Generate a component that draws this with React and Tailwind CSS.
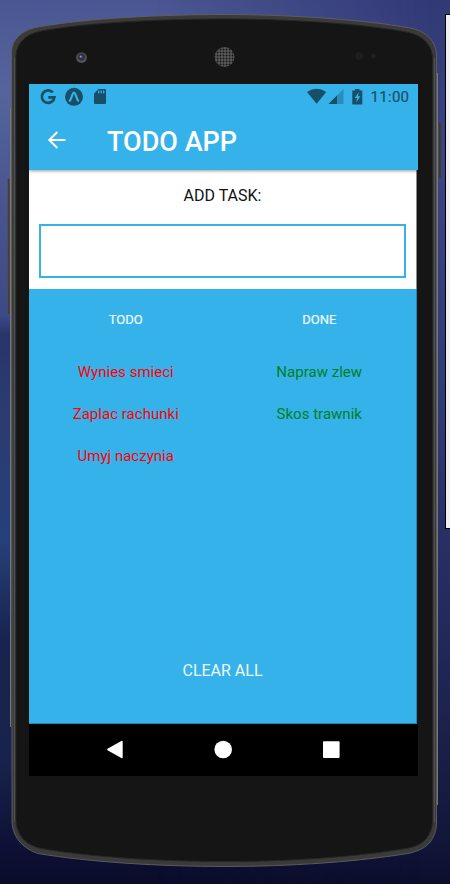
const BODY =
  'M11.5 52 C12 39 22 30 38 27 C88 18 165 14.5 224.5 14.5 C283 14.5 361 19 410 28 C427 31 436.500 42 436.500 56 L436.500 825 C434.500 842 426 849.500 408 853.500 C355 862 290 866.500 225 866.500 C160 866.500 88 862 38 853.500 C24 849 13.500 839 12 823 Z';
const FACE =
  'M16 56 C16.500 43 26 34 41 31 C92 22 165 19 224.500 19 C283 19 357 23 406 32 C422 35 432 44 432.500 58 L432.500 821 C431.500 837 423 845.500 406 848.500 C355 857 290 861.500 225 861.500 C160 861.500 90 857 41 848.500 C26 845 17 836 16 821 Z';

function PhoneFrame() {
  return (
    <svg className="absolute inset-0" width="450" height="884" viewBox="0 0 450 884" fill="none" aria-hidden="true">
      <defs>
        <linearGradient id="key" x1="0" x2="1" y1="0" y2="0">
          <stop stopColor="#333" />
          <stop offset="0.500" stopColor="#4c4c4c" />
          <stop offset="1" stopColor="#1c1c1c" />
        </linearGradient>
        <pattern id="mesh" width="3" height="3" patternUnits="userSpaceOnUse">
          <rect width="3" height="3" fill="#5a5a5a" />
          <rect x="0.600" y="0.600" width="1.900" height="1.900" rx="0.800" fill="#181818" />
        </pattern>
        <radialGradient id="lens" cy="0.450">
          <stop stopColor="#5a5aa8" />
          <stop offset="0.400" stopColor="#25254f" />
          <stop offset="0.600" stopColor="#3a3a3a" />
          <stop offset="1" stopColor="#606060" />
        </radialGradient>
      </defs>
      <rect x="7.800" y="178.500" width="4" height="136" fill="url(#key)" stroke="#555" strokeWidth="0.600" />
      <rect x="437" y="122.500" width="3.500" height="55" fill="url(#key)" stroke="#444" strokeWidth="0.600" />
      <path d="M10.500 108V727M437.500 73V805" stroke="#777" />
      <path d={BODY} fill="#3a3a3a" stroke="#606060" strokeWidth="0.900" />
      <path d={FACE} fill="#151515" stroke="#252525" />
      <path d="M14.500 58V822M434.500 58V822" stroke="#505050" />
      <circle cx="81.500" cy="57.500" r="5.300" fill="url(#lens)" />
      <circle cx="80.500" cy="56.500" r="0.900" fill="#9999cc" />
      <circle cx="224.500" cy="57" r="10" fill="url(#mesh)" />
      <circle cx="359.500" cy="56" r="4" fill="#1d1d1d" />
      <circle cx="373.500" cy="56" r="2.500" fill="#1f1f1f" />
    </svg>
  );
}

function StatusBar() {
  return (
    <div className="flex h-[26px] items-center text-[#174f66]">
      <svg width="76" height="26" viewBox="0 0 76 26" className="ml-2" fill="none">
        <path d="M15.800 8.400A6.300 6.300 0 1 0 17.400 13.300H11.300" stroke="currentColor" strokeWidth="2.700" />
        <circle cx="37" cy="12.800" r="9" fill="currentColor" />
        <path d="M32.800 16.800 C34.700 14.500 35.500 8.500 37 8.500 C38.500 8.500 39.300 14.500 41.200 16.800" stroke="#36b2eb" strokeWidth="2.100" strokeLinecap="round" />
        <path d="M61.500 5H68q1 0 1 1V19q0 1-1 1H58q-1 0-1-1V9.500Z" fill="currentColor" />
        <path d="M61.700 6.500V9.300M64.200 6.500V9.300M66.700 6.500V9.300" stroke="#36b2eb" strokeWidth="1.300" />
      </svg>
      <svg width="58" height="26" viewBox="306 84 58 26" className="ml-[193px]">
        <path d="M307 92Q316.500 85.500 326.200 92L316.600 103.800Z" fill="currentColor" />
        <path d="M328.500 104L343.500 89V104Z" fill="#2b8dba" />
        <path d="M328.500 104L337 95.500V104Z" fill="currentColor" />
        <path d="M355 89H359.500V90.500H362.300V104.500H352.300V90.500H355Z" fill="currentColor" />
        <path d="M358.800 92L354.700 98H357.100L356.200 102.500L360.400 96.300H357.900Z" fill="#36b2eb" />
      </svg>
      <span className="ml-[6.500px] pt-px text-[15px] leading-none tracking-[0.300px] [-webkit-text-stroke:0.200px_#174f66]">11:00</span>
    </div>
  );
}

function TaskColumn({ title, tasks, color }) {
  return (
    <section className="flex flex-1 flex-col items-center text-center">
      <h2 className="mt-[22px] h-[51px] text-[13px] leading-[18px] text-[#eef9ff] [-webkit-text-stroke:0.200px_#eef9ff]">{title}</h2>
      <ul className={`flex flex-col gap-[22px] text-[15px] leading-5 tracking-[0.020px] ${color}`}>
        {tasks.map((task) => (
          <li key={task}>{task}</li>
        ))}
      </ul>
    </section>
  );
}

export default function App() {
  return (
    <div className="relative h-[884px] w-[450px] overflow-hidden bg-[linear-gradient(180deg,#4a5692_0px,#56649c_90px,#47548e_210px,#3d4a88_315px,#28346a_335px,#2b3b70_400px,#26407a_540px,#18234f_640px,#18234d_760px,#0d1034_850px,#0b0c2a_884px)] font-[Roboto,sans-serif]">
      <div className="absolute inset-0 bg-[linear-gradient(180deg,#323a76_0px,#3b4380_170px,#303a75_400px,#292f65_540px,#1e2450_700px,#12163a_840px,#0c0e2c_884px)] [mask-image:linear-gradient(90deg,transparent_35%,black_95%)]" />
      <div className="absolute top-[14px] left-[445px] h-[515px] w-[10px] border border-black bg-[#f0f0f0]" />
      <PhoneFrame />
      <main className="relative ml-[29px] flex h-[776px] w-[389px] flex-col pt-[84px]">
        <header className="relative z-10 h-[86px] shrink-0 bg-[#36b2eb] shadow-[0_1px_3px_rgba(0,0,0,0.400)]">
          <StatusBar />
          <div className="flex h-[60px] items-center text-white">
            <svg width="20" height="20" viewBox="0 0 20 20" className="ml-[18px]" fill="none" stroke="currentColor" strokeWidth="2">
              <path d="M18.500 10H3M10.300 2L2.300 10L10.300 18" />
            </svg>
            <h1 className="ml-10 pt-[5px] text-[27px] leading-none font-medium">TODO APP</h1>
          </div>
        </header>
        <div className="flex h-[554px] w-[388px] shrink-0 flex-col">
          <label className="flex h-[119px] shrink-0 flex-col border-r border-[#8a8a8a] bg-white px-[10px] pt-4 text-center text-base leading-5 text-[#111]">
            ADD TASK:
            <input className="mt-[18px] h-[54px] w-[367px] border-2 border-[#36b2eb] bg-white px-3 outline-none" />
          </label>
          <div className="flex h-[435px] flex-col border-r border-b border-[#2686b2] bg-[#36b2eb]">
            <div className="flex h-[372px]">
              <TaskColumn title="TODO" tasks={['Wynies smieci', 'Zaplac rachunki', 'Umyj naczynia']} color="text-[#ff0000]" />
              <TaskColumn title="DONE" tasks={['Napraw zlew', 'Skos trawnik']} color="text-[#008022]" />
            </div>
            <button className="h-5 self-center text-base leading-5 text-[#eef9ff]">CLEAR ALL</button>
          </div>
        </div>
        <nav className="flex h-[52px] shrink-0 items-center bg-black">
          <svg width="389" height="52" viewBox="29 724 389 52" fill="white">
            <path d="M107.500 748.800L121.300 740.900Q122.700 740.300 122.700 741.700V757.300Q122.700 758.700 121.300 758.100L107.500 750.200Q106.700 749.500 107.500 748.800Z" />
            <circle cx="223.200" cy="749.500" r="8.800" />
            <rect x="323" y="741.300" width="16.600" height="16.600" rx="0.800" />
          </svg>
        </nav>
      </main>
    </div>
  );
}
